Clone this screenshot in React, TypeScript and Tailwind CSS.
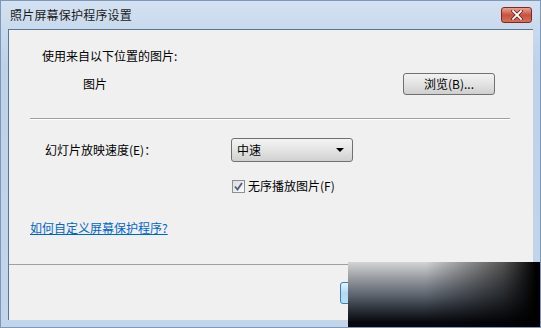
import React from 'react';

const font = { fontFamily: '"Noto Sans CJK SC", "Liberation Sans", sans-serif' };

const CloseButton = () => (
  <div className="w-[31px] h-[16px] rounded-[3px] border border-[#7a2a22] bg-linear-to-b from-[#e8a293] via-[#c9503f] to-[#d5705c] flex items-center justify-center">
    <svg width="12" height="10" viewBox="0 0 12 10">
      <path d="M2 1 L10 9 M10 1 L2 9" stroke="#5a1a12" strokeWidth="3.2" strokeLinecap="square" />
      <path d="M2 1 L10 9 M10 1 L2 9" stroke="#ffffff" strokeWidth="1.8" strokeLinecap="square" />
    </svg>
  </div>
);

const Checkbox = () => (
  <div className="w-[13px] h-[13px] border border-[#8e8f8f] bg-linear-to-br from-[#dcdcdc] to-[#fbfbfb] flex items-center justify-center">
    <svg width="9" height="9" viewBox="0 0 9 9">
      <path d="M1 4.5 L3.5 7.5 L8 1" fill="none" stroke="#4b5f80" strokeWidth="1.8" />
    </svg>
  </div>
);

export default function App() {
  return (
    <div
      className="relative w-[541px] h-[328px] overflow-hidden bg-linear-to-b from-[#d3e1f1] via-[#bdd1e9] via-20% to-[#c3d5ea] border border-[#7d97b8] text-[12px] text-black"
      style={font}
    >
      {/* Title bar */}
      <div className="h-[28px] flex items-center justify-between pl-[9px] pr-[8px]">
        <span className="text-[12px] text-[#1b1b1b] tracking-[0.2px]">照片屏幕保护程序设置</span>
        <CloseButton />
      </div>

      {/* Client area */}
      <div className="mx-[7px] h-[291px] bg-[#f0f0f0] border-l border-t border-[#5d7594] flex flex-col">
        <div className="pl-[33px] pt-[18px] leading-[16px]">使用来自以下位置的图片:</div>

        <div className="mt-[9px] pl-[74px] pr-[38px] flex items-center justify-between h-[22px]">
          <span>图片</span>
          <button className="w-[92px] h-[22px] rounded-[3px] border border-[#707070] bg-linear-to-b from-[#f2f2f2] via-[#e3e3e3] to-[#cfcfcf] text-[12px]">
            浏览(B)...
          </button>
        </div>

        <div className="mt-[23px] ml-[21px] mr-[23px] h-[2px] border-t border-[#a0a0a0] border-b border-b-white" />

        <div className="mt-[18px] pl-[36px] flex items-center h-[24px]">
          <span className="w-[186px]">幻灯片放映速度(E)：</span>
          <div className="w-[122px] h-[24px] rounded-[3px] border border-[#707070] bg-linear-to-b from-[#f4f4f4] via-[#e4e4e4] to-[#d0d0d0] flex items-center justify-between pl-[5px] pr-[8px]">
            <span>中速</span>
            <svg width="8" height="4" viewBox="0 0 8 4">
              <path d="M0 0 L8 0 L4 4 Z" fill="#000" />
            </svg>
          </div>
        </div>

        <div className="mt-[16px] pl-[223px] flex items-center gap-[3px] h-[16px]">
          <Checkbox />
          <span>无序播放图片(F)</span>
        </div>

        <div className="mt-[26px] pl-[21px] h-[16px] leading-[16px]">
          <span className="text-[#0066cc] underline">如何自定义屏幕保护程序?</span>
        </div>

        <div className="flex-1" />

        <div className="h-[56px] border-t border-[#a0a0a0] bg-[#f0f0f0]">
          <div className="mt-[17px] ml-[331px] w-[120px] h-[22px] rounded-[3px] border border-[#3c7fb1] bg-linear-to-b from-[#e5f4fc] via-[#b0daf2] to-[#b6e0f5]" />
        </div>
      </div>

      {/* Dark smear over the bottom-right corner */}
      <div className="absolute left-[347px] top-[261px] w-[194px] h-[67px] bg-linear-to-b from-[#d4d4d4] via-[#5c636e] via-50% to-[#07090e] to-90%">
        <div className="w-full h-full bg-linear-to-r from-transparent from-40% via-black/60 via-80% to-black to-97%" />
      </div>
    </div>
  );
}
